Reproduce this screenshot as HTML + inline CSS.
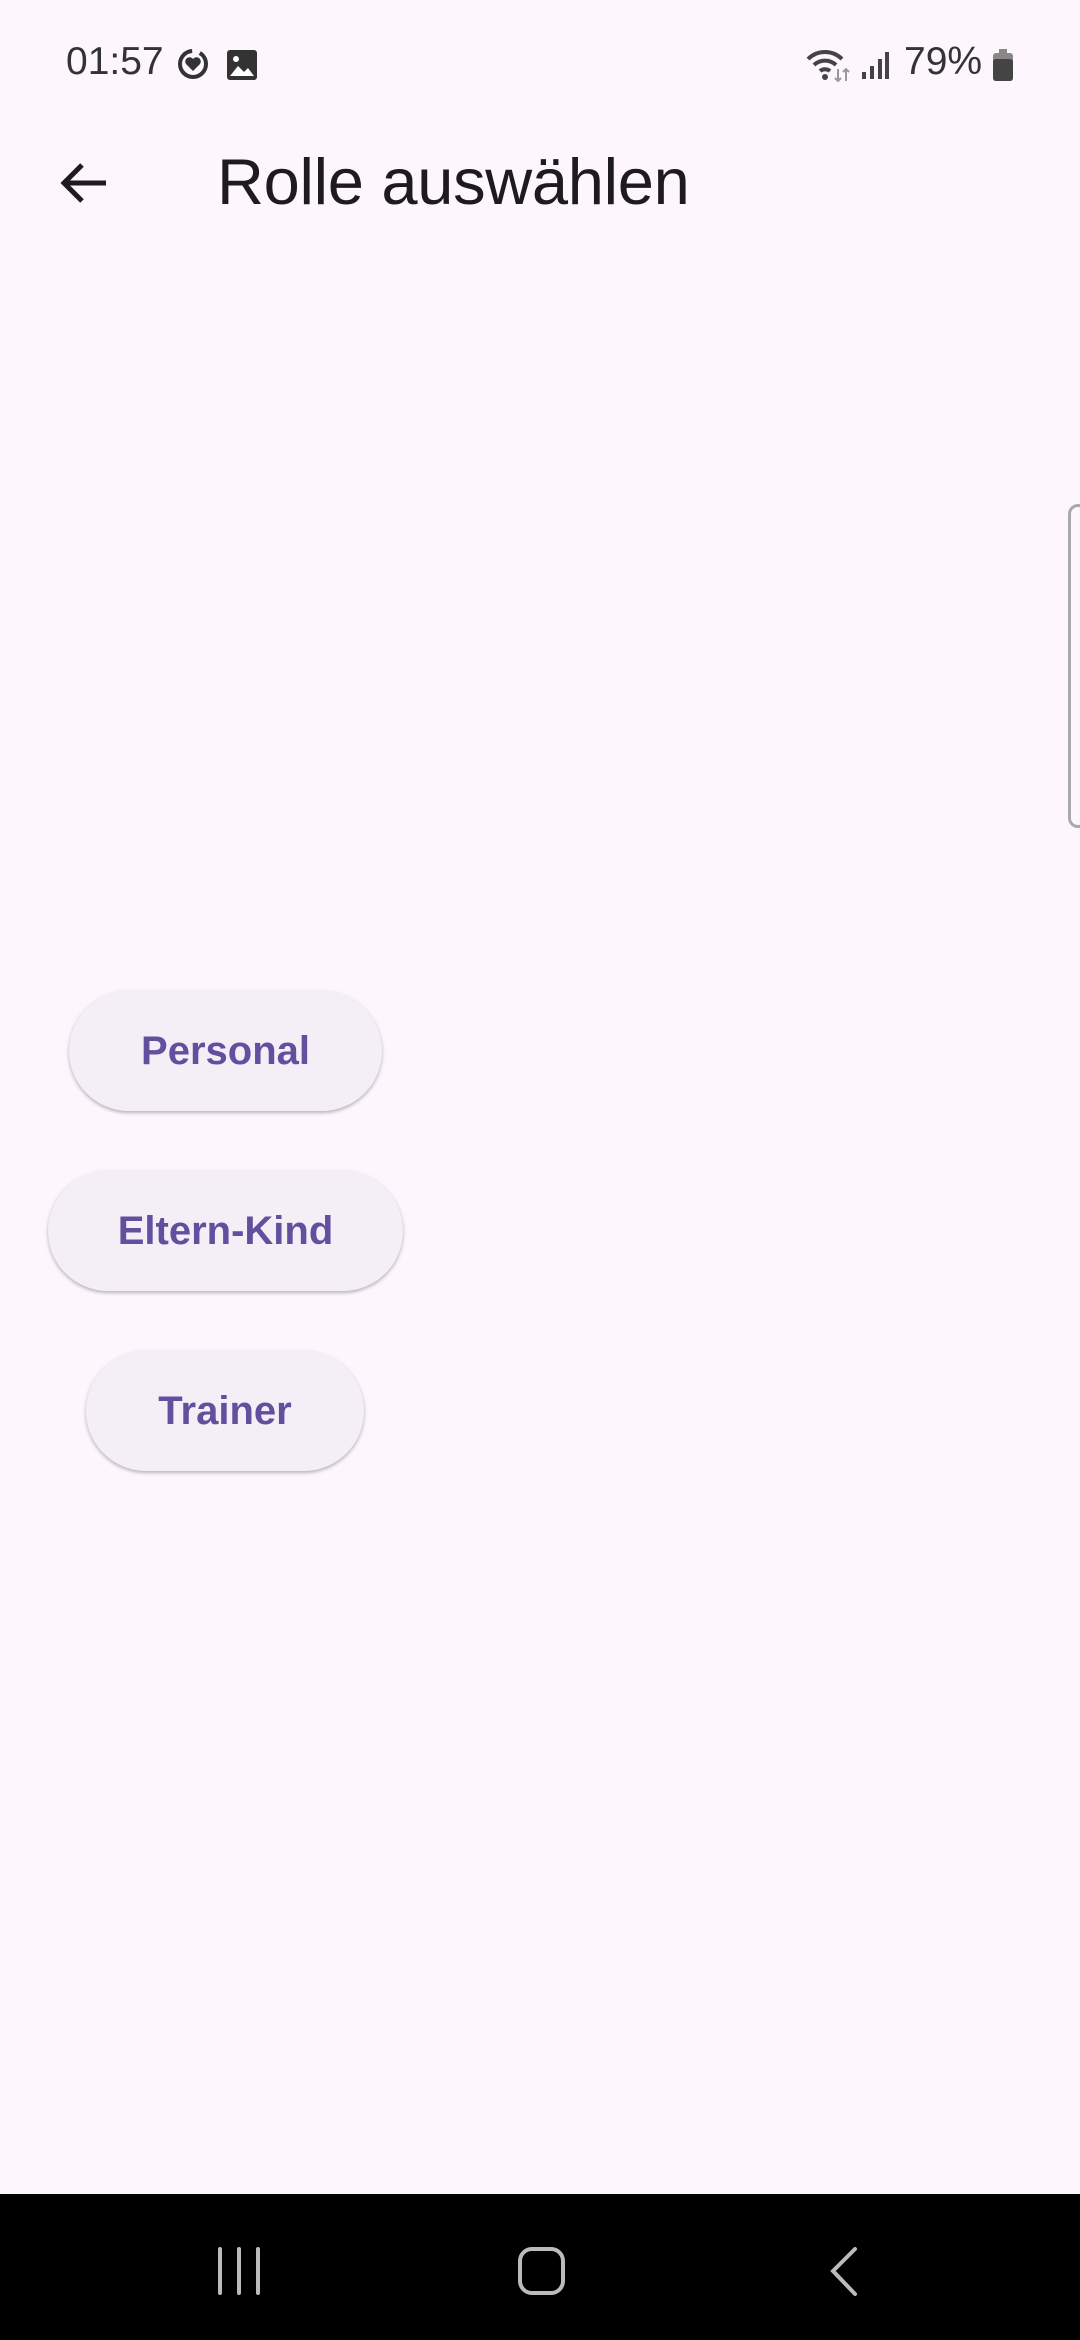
<!DOCTYPE html>
<html><head><meta charset="utf-8"><style>
html,body{margin:0;padding:0}
body{width:1080px;height:2340px;background:#fdf7fd;position:relative;overflow:hidden;font-family:"Liberation Sans",Roboto,sans-serif}
.abs{position:absolute}
.btn{position:absolute;height:120px;border-radius:60px;background:#f4eff6;box-shadow:0 2px 3px rgba(0,0,0,0.22),0 1px 6px rgba(0,0,0,0.08);color:#62509f;font-size:40px;font-weight:bold;display:flex;align-items:center;justify-content:center}
</style></head><body>
<div class="abs" style="left:66px;top:40px;font-size:39px;color:#333;">01:57</div>
<svg class="abs" style="left:176px;top:47px" width="34" height="34" viewBox="0 0 34 34"><circle cx="17" cy="17" r="13" fill="none" stroke="#333" stroke-width="4" stroke-dasharray="60 8"/><path d="M17 24 L10 17 A4 4 0 0 1 17 12 A4 4 0 0 1 24 17 Z" fill="#333"/></svg>
<svg class="abs" style="left:226px;top:49px" width="32" height="32" viewBox="0 0 32 32"><rect x="1" y="1" width="30" height="30" rx="3" fill="#333"/><path d="M4 27 L12 17 L18 23 L22 19 L28 27 Z" fill="#fff"/><circle cx="10" cy="10" r="3" fill="#fff"/></svg>
<svg class="abs" style="left:806px;top:47px" width="46" height="36" viewBox="0 0 46 36"><path d="M2 12 A24 24 0 0 1 36 12" fill="none" stroke="#444" stroke-width="4"/><path d="M8 18 A16 16 0 0 1 30 18" fill="none" stroke="#444" stroke-width="4"/><path d="M14 24 A8 8 0 0 1 24 24" fill="none" stroke="#444" stroke-width="4"/><circle cx="19" cy="30" r="3" fill="#444"/><path d="M32 22 v12 M29 31 l3 3 3-3 M40 34 v-12 M37 25 l3-3 3 3" stroke="#999" stroke-width="2" fill="none"/></svg>
<svg class="abs" style="left:860px;top:50px" width="30" height="30" viewBox="0 0 30 30"><rect x="2" y="22" width="4" height="7" fill="#444"/><rect x="10" y="16" width="4" height="13" fill="#444"/><rect x="18" y="9" width="4" height="20" fill="#444"/><rect x="25" y="2" width="4" height="27" fill="#444"/></svg>
<div class="abs" style="left:904px;top:40px;font-size:39px;color:#333;">79%</div>
<svg class="abs" style="left:992px;top:49px" width="22" height="32" viewBox="0 0 22 32"><rect x="7" y="0" width="8" height="4" fill="#888"/><rect x="1" y="4" width="20" height="28" rx="3" fill="#888"/><rect x="1" y="10" width="20" height="22" rx="3" fill="#444"/></svg>
<svg class="abs" style="left:56px;top:158px" width="56" height="50" viewBox="0 0 56 50"><path d="M50 25 H8 M26 7 L8 25 L26 43" fill="none" stroke="#1d1b20" stroke-width="5"/></svg>
<div class="abs" style="left:217px;top:144px;font-size:65px;color:#1d1b20;letter-spacing:-0.3px">Rolle auswählen</div>
<div class="abs" style="left:1068px;top:504px;width:20px;height:324px;border:3px solid #aaa;border-radius:14px;box-sizing:border-box"></div>
<div class="btn" style="left:69px;top:991px;width:313px">Personal</div>
<div class="btn" style="left:48px;top:1171px;width:355px">Eltern-Kind</div>
<div class="btn" style="left:86px;top:1351px;width:278px">Trainer</div>
<div class="abs" style="left:0;top:2194px;width:1080px;height:146px;background:#000"></div>
<svg class="abs" style="left:200px;top:2230px" width="700" height="80" viewBox="200 2230 700 80"><path d="M220 2249 V2293 M239 2249 V2293 M258 2249 V2293" stroke="#bbb" stroke-width="4" stroke-linecap="round"/><rect x="520" y="2249" width="43" height="44" rx="12" fill="none" stroke="#bbb" stroke-width="4"/><path d="M855 2249 L833 2271 L855 2294" fill="none" stroke="#bbb" stroke-width="4" stroke-linecap="round"/></svg>
</body></html>
